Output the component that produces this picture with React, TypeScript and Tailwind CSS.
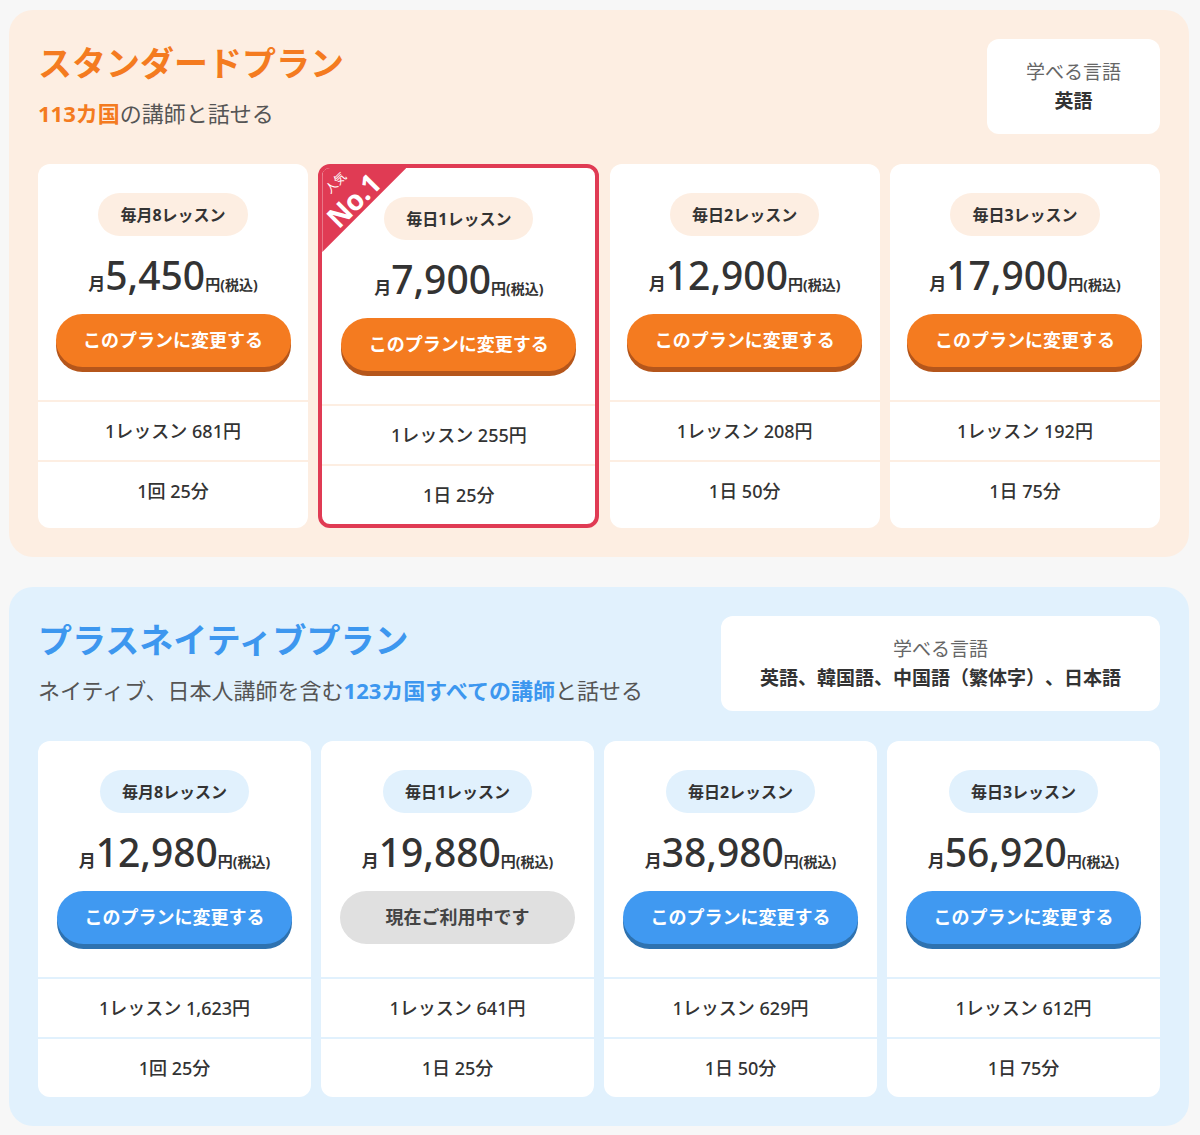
import React from "react";

type Plan = {
  label: string;
  price: string;
  perLesson: string;
  duration: string;
  popular?: boolean;
  current?: boolean;
};

type Theme = {
  badge: string;
  divider: string;
  button: string;
};

const orange: Theme = {
  badge: "bg-[#fdeee2]",
  divider: "border-[#fdeee2]",
  button: "bg-[#f47b20] shadow-[0_5px_0_#b5561b]",
};

const blue: Theme = {
  badge: "bg-[#e1f1fd]",
  divider: "border-[#e1f1fd]",
  button: "bg-[#4099f1] shadow-[0_5px_0_#2e72b0]",
};

const standardPlans: Plan[] = [
  { label: "毎月8レッスン", price: "5,450", perLesson: "1レッスン 681円", duration: "1回 25分" },
  { label: "毎日1レッスン", price: "7,900", perLesson: "1レッスン 255円", duration: "1日 25分", popular: true },
  { label: "毎日2レッスン", price: "12,900", perLesson: "1レッスン 208円", duration: "1日 50分" },
  { label: "毎日3レッスン", price: "17,900", perLesson: "1レッスン 192円", duration: "1日 75分" },
];

const nativePlans: Plan[] = [
  { label: "毎月8レッスン", price: "12,980", perLesson: "1レッスン 1,623円", duration: "1回 25分" },
  { label: "毎日1レッスン", price: "19,880", perLesson: "1レッスン 641円", duration: "1日 25分", current: true },
  { label: "毎日2レッスン", price: "38,980", perLesson: "1レッスン 629円", duration: "1日 50分" },
  { label: "毎日3レッスン", price: "56,920", perLesson: "1レッスン 612円", duration: "1日 75分" },
];

function Ribbon() {
  return (
    <>
      <div className="absolute left-0 top-0 h-[84px] w-[84px] bg-[#e03b54] [clip-path:polygon(0_0,100%_0,0_100%)]" />
      <span className="absolute left-[14px] top-[15px] -translate-x-1/2 -translate-y-1/2 -rotate-45 text-[12px] leading-[14px] text-white">
        人気
      </span>
      <span className="absolute left-[31px] top-[32px] -translate-x-1/2 -translate-y-1/2 -rotate-45 text-[28px] font-bold leading-[30px] tracking-[-0.5px] text-white">
        No.1
      </span>
    </>
  );
}

function PlanCard({ plan, theme, className }: { plan: Plan; theme: Theme; className?: string }) {
  return (
    <div
      className={
        "relative flex flex-col overflow-hidden rounded-[12px] bg-white " +
        (plan.popular ? "border-4 border-[#e03b54] " : "") +
        (className ?? "")
      }
    >
      {plan.popular && <Ribbon />}
      <div className="flex flex-col items-center pt-[29px] pb-[33px]">
        <div
          className={
            "flex h-[43px] items-center rounded-full px-[22px] text-[16px] font-bold text-[#333] " + theme.badge
          }
        >
          {plan.label}
        </div>
        <div className="mt-[14px] flex h-[50px] items-baseline text-[#333]">
          <span className="text-[17px] font-bold">月</span>
          <span className="text-[39px] font-medium leading-[50px]">{plan.price}</span>
          <span className="text-[15px] font-bold">円</span>
          <span className="text-[14px] font-bold">(税込)</span>
        </div>
        <div className="mt-[14px]">
          {plan.current ? (
            <div className="flex h-[53px] w-[235px] items-center justify-center rounded-full bg-[#e0e0e0] text-[18px] font-bold text-[#444]">
              現在ご利用中です
            </div>
          ) : (
            <div
              className={
                "flex h-[53px] w-[235px] items-center justify-center rounded-full text-[18px] font-bold text-white " +
                theme.button
              }
            >
              このプランに変更する
            </div>
          )}
        </div>
      </div>
      <div className={"flex h-[60px] items-center justify-center border-t-2 text-[18px] font-medium text-[#333] " + theme.divider}>
        {plan.perLesson}
      </div>
      <div className={"flex h-[60px] items-center justify-center border-t-2 text-[18px] font-medium text-[#333] " + theme.divider}>
        {plan.duration}
      </div>
    </div>
  );
}

function LangBox({ langs }: { langs: string }) {
  return (
    <div className="flex h-[95px] shrink-0 flex-col items-center justify-center rounded-[12px] bg-white px-[39px] text-center [text-spacing-trim:space-all]">
      <div className="text-[19px] leading-[29px] text-[#666]">学べる言語</div>
      <div className="text-[19px] font-bold leading-[29px] text-[#333]">{langs}</div>
    </div>
  );
}

export default function App() {
  return (
    <div
      className="min-h-[1135px] w-[1200px] bg-[#f7f7f7] pl-[9px] pr-[11px] py-[10px] [text-spacing-trim:space-all]"
      style={{ fontFamily: '"Noto Sans", "Noto Sans CJK JP", sans-serif' }}
    >
      <div className="flex flex-col gap-[30px]">
        {/* Standard plan */}
        <section className="rounded-[24px] bg-[#fdeee2] p-[29px]">
          <div className="flex items-start justify-between">
            <div>
              <h2 className="text-[34px] font-bold leading-[48px] text-[#f47b20]">スタンダードプラン</h2>
              <p className="mt-[10px] text-[22px] leading-[32px] text-[#555]">
                <span className="font-bold text-[#f47b20]">113カ国</span>の講師と話せる
              </p>
            </div>
            <LangBox langs="英語" />
          </div>
          <div className="mt-[30px] flex items-stretch justify-between">
            {standardPlans.map((p, i) => (
              <PlanCard key={i} plan={p} theme={orange} className={p.popular ? "w-[281px]" : "w-[270px]"} />
            ))}
          </div>
        </section>

        {/* Plus native plan */}
        <section className="rounded-[24px] bg-[#e1f1fd] p-[29px]">
          <div className="flex items-start justify-between">
            <div>
              <h2 className="text-[34px] font-bold leading-[48px] text-[#3d97ef]">プラスネイティブプラン</h2>
              <p className="mt-[10px] text-[22px] leading-[32px] text-[#555]">
                ネイティブ、日本人講師を含む
                <span className="font-bold text-[#3d97ef]">123カ国すべての講師</span>と話せる
              </p>
            </div>
            <LangBox langs="英語、韓国語、中国語（繁体字）、日本語" />
          </div>
          <div className="mt-[30px] grid grid-cols-4 gap-[10px]">
            {nativePlans.map((p, i) => (
              <PlanCard key={i} plan={p} theme={blue} />
            ))}
          </div>
        </section>
      </div>
    </div>
  );
}
